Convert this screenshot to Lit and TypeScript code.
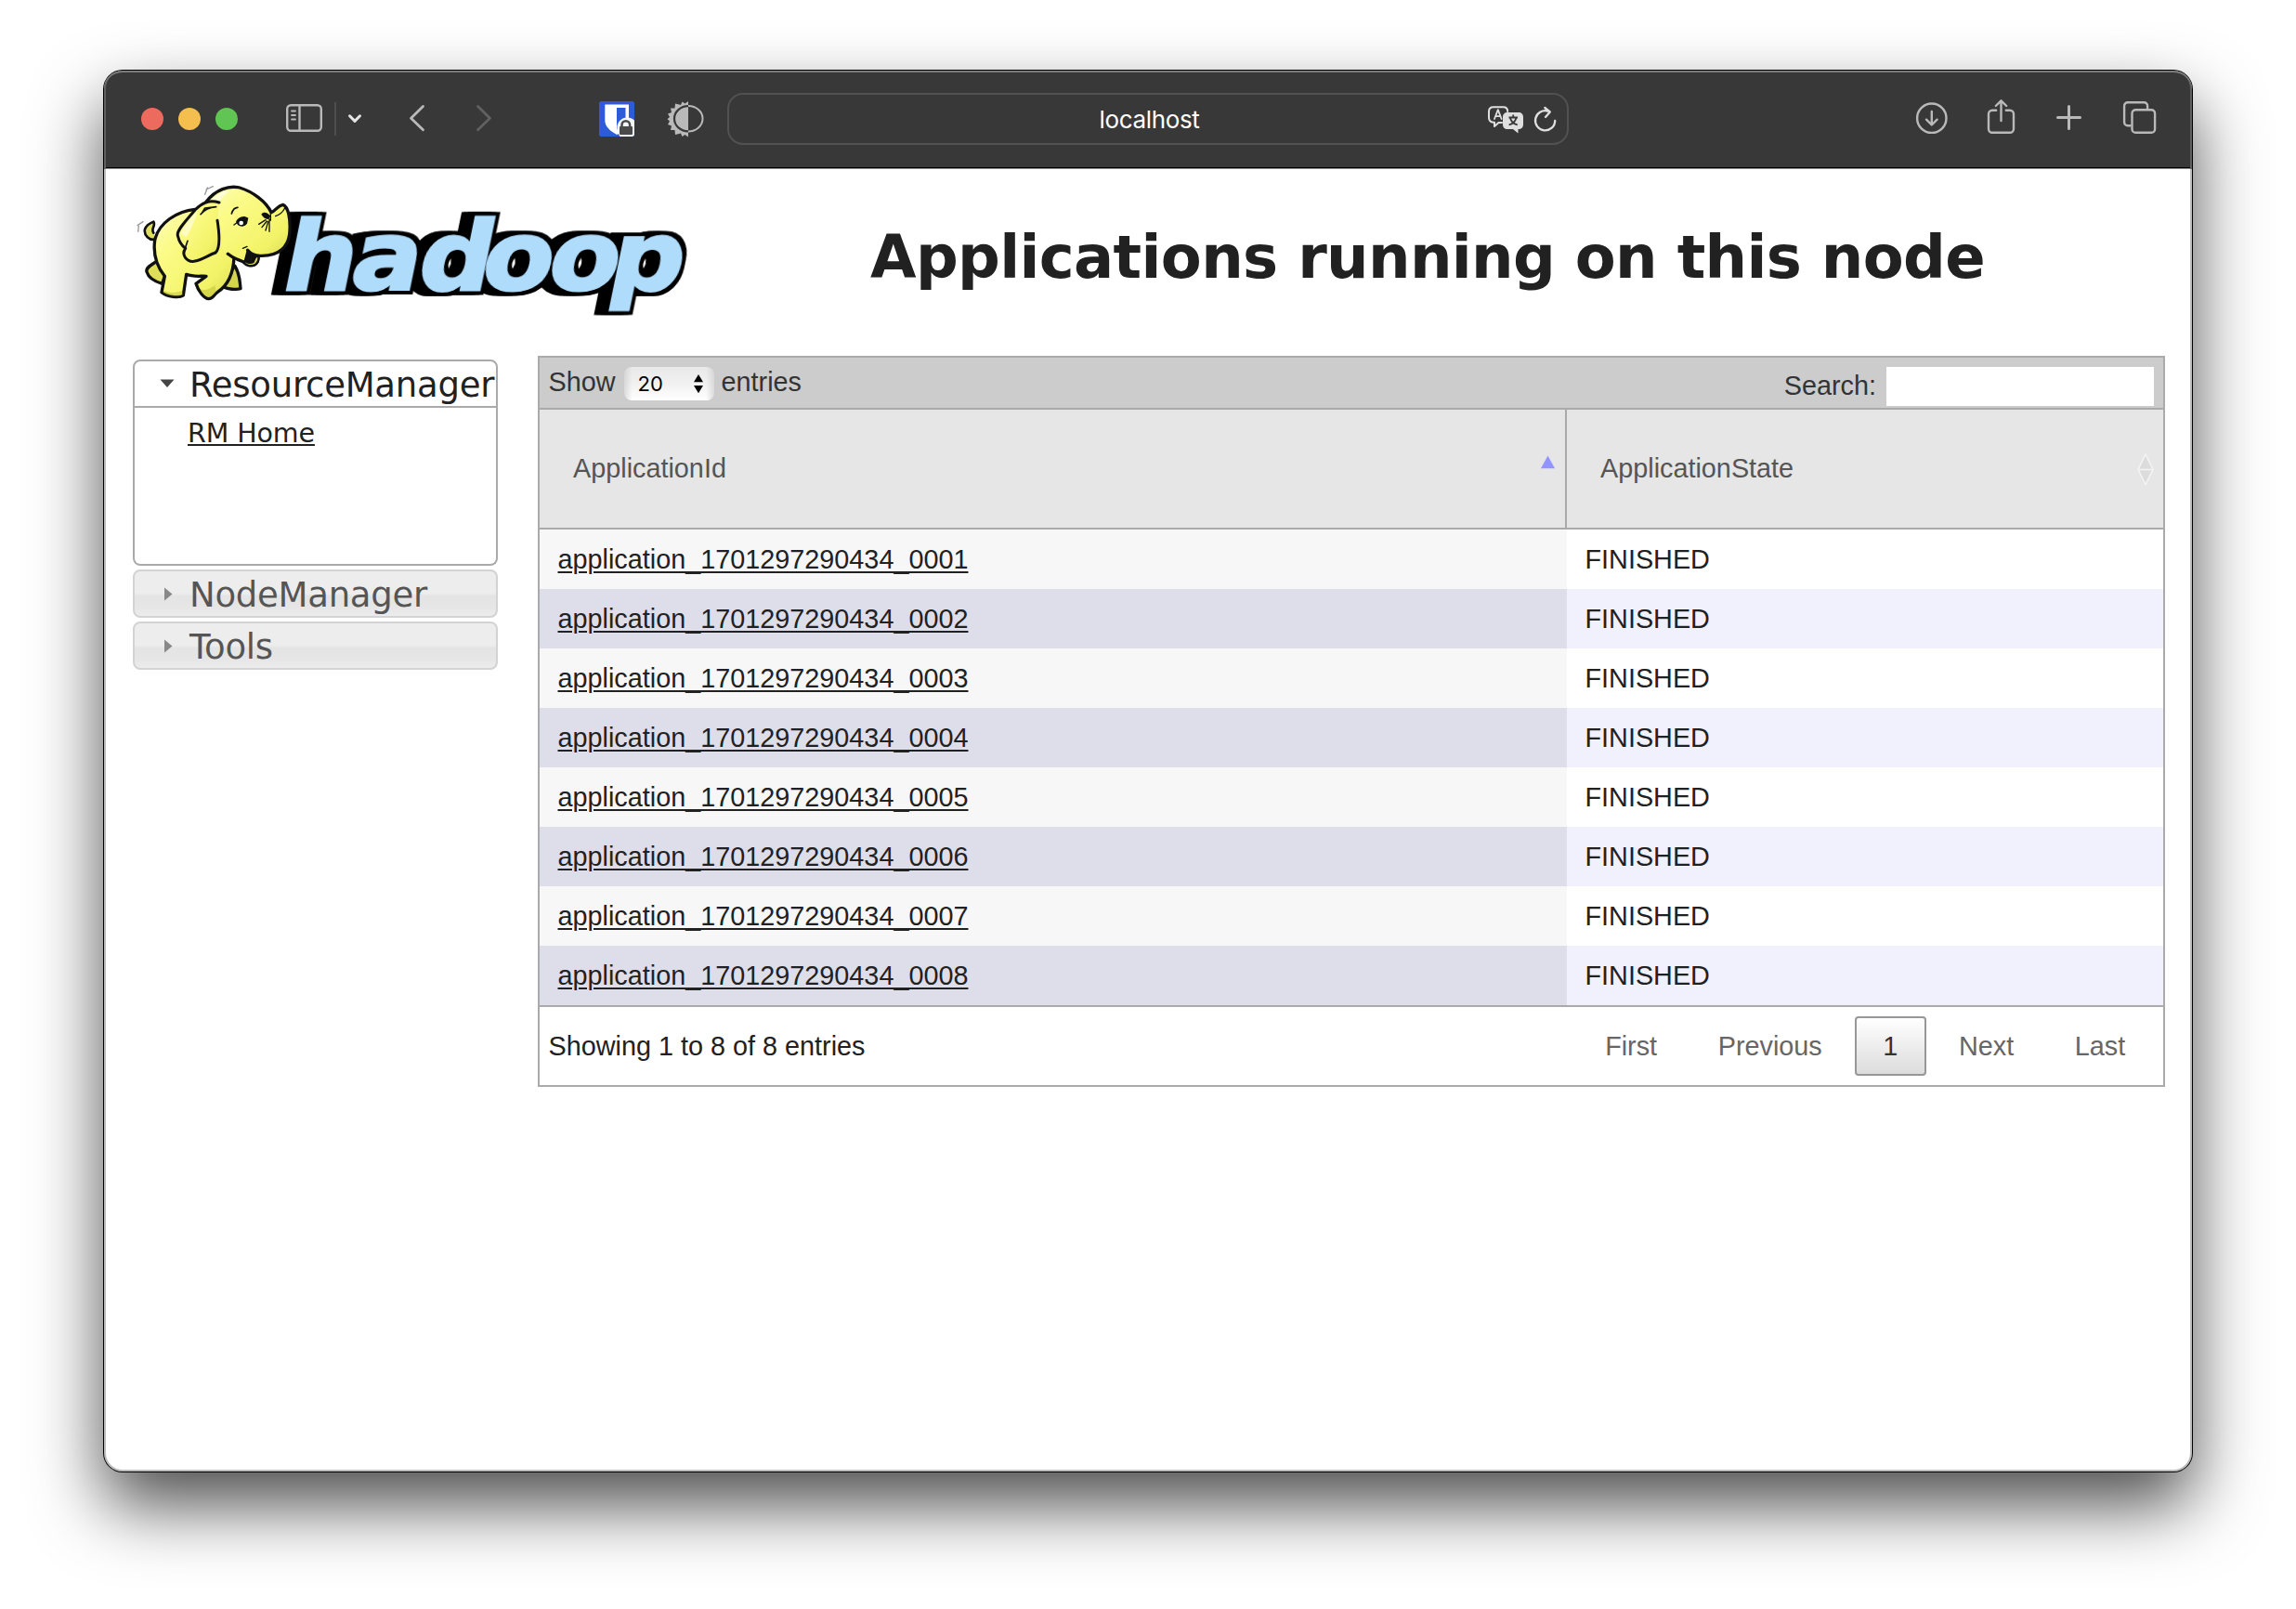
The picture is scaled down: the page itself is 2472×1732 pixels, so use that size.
import { LitElement, html, css, svg } from "lit";
import { customElement, property } from "lit/decorators.js";

const appIds = [1, 2, 3, 4, 5, 6, 7, 8].map((n) => `application_1701297290434_000${n}`);

@customElement("browser-toolbar")
export class BrowserToolbar extends LitElement {
  static styles = css`
    :host { display: block; }
    .bar {
      display: flex;
      align-items: center;
      height: 104px;
      background: #383838;
      border-bottom: 1px solid #000;
    }
    .lights { display: flex; gap: 16px; padding-left: 40px; }
    .light { width: 24px; height: 24px; border-radius: 50%; }
    .red { background: #ed6a5e; }
    .yellow { background: #f5bf4f; }
    .green { background: #61c554; }
    svg { display: block; flex: none; fill: none; stroke: #b9b9b9; stroke-width: 2.4; stroke-linecap: round; stroke-linejoin: round; }
    .nav { display: flex; padding-left: 40px; gap: 30px; width: 388px; box-sizing: border-box; }
    .pair { display: flex; }
    .ext { display: flex; gap: 24px; width: 139px; }
    .address {
      display: flex;
      align-items: center;
      box-sizing: border-box;
      width: 906px;
      height: 56px;
      border: 2px solid #515151;
      border-radius: 17px;
      padding-left: 398.500px;
      padding-right: 9px;
      color: #fff;
      font: 26px/36px Inter, "Liberation Sans", sans-serif;
      letter-spacing: -0.35px;
      justify-content: space-between;
    }
    .host { padding-top: 1px; }
    .right { display: flex; gap: 16px; margin-left: auto; padding-right: 27px; }
  `;

  render() {
    return html`
      <div class="bar">
        <div class="lights">
          <div class="light red"></div>
          <div class="light yellow"></div>
          <div class="light green"></div>
        </div>
        <div class="nav">
          <div class="pair">
            <svg width="62" height="52" viewBox="296 102 62 52">
              <rect x="309.2" y="113.2" width="36.6" height="27.6" rx="4" />
              <path d="M322.5 113.5v27" />
              <path stroke-width="1.8" d="M314 119.5h4M314 124h4M314 128.5h4" />
            </svg>
            <svg width="42" height="52" viewBox="358 102 42 52">
              <path stroke="#4e4e4e" stroke-width="2" stroke-linecap="butt" d="M361 110v36" />
              <path stroke="#e4e4e4" stroke-width="3" d="M376.500 124.800l5.500 5.600l5.500-5.600" />
            </svg>
          </div>
          <svg width="40" height="52" viewBox="430 102 40 52">
            <path stroke-width="2.800" d="M455.500 114.500L442.500 127.200L455.500 139.800" />
          </svg>
          <svg width="40" height="52" viewBox="500 102 40 52">
            <path stroke="#616161" stroke-width="2.800" d="M514.500 114.500L527.500 127.200L514.500 139.800" />
          </svg>
        </div>
        <div class="ext">
          <svg width="46" height="52" viewBox="644 102 46 52">
            <rect x="645" y="109" width="38" height="38" rx="2.500" fill="#2e5cd9" stroke="none" />
            <path fill="#fff" stroke="none" d="M651.300 112.600h25.700v17c0 7-6 12-12.800 15.400c-6.800-3.400-12.900-8.400-12.900-15.400z" />
            <path fill="#2e5cd9" stroke="none" d="M664 116h9.500v13.500c0 4-4.500 7-9.500 10z" />
            <path fill="#f3f6fc" stroke="none" d="M683 129.500c-6-6-17-3-18.500 6c-.6 4 .4 8 3 11.500h13c1.500 0 2.500-1 2.500-2.500z" />
            <path stroke="#4a4a4a" stroke-width="2.500" d="M669.500 137v-2.500a4.300 4.300 0 0 1 8.600 0v2.500" />
            <rect x="667" y="136" width="14" height="9" rx="1" fill="#4a4a4a" stroke="none" />
          </svg>
          <svg width="50" height="52" viewBox="714 102 50 52">
            <path fill="#b9b9b9" stroke="none" d="M741 109l-3.500 2.500l-3-2l-1.500 3.500l-6-1.500l-.5 5l-4.500 0l1 4.500l-4 1.500l2 3.500l-2.500 2.200l2.500 2.200l-2 3.500l4 1.500l-1 4.500l4.500 0l.5 5l6-1.500l1.500 3.500l3-2l3.500 2.500z" />
            <ellipse cx="741" cy="127.700" rx="15" ry="13.600" stroke="#383838" stroke-width="2.200" />
            <path stroke="#b9b9b9" stroke-width="2" stroke-linecap="butt" d="M741 114a15.500 13.700 0 0 1 0 27.400" />
          </svg>
        </div>
        <div class="address">
          <span class="host">localhost</span>
          <svg width="80" height="52" viewBox="1598 102 80 52">
            <g stroke="#dfdfdf" stroke-width="2">
              <path d="M1617 132h-3.500l-4.500 4v-4.200c-3.800 0-6-1.800-6-5v-6.800c0-3 2-4.800 5-4.800h10.500c3 0 4.700 1.800 4.700 4.800" />
              <path stroke-width="1.800" d="M1609 128l3.800-9.800l3.800 9.800M1610.300 125.200h5" />
              <path fill="#dfdfdf" stroke="none" d="M1623 121h12c3 0 5 2 5 5v8c0 3-2 5-5 5h-.5v4.500l-5.500-4.500h-6c-3 0-5-2-5-5v-8c0-3 2-5 5-5z" />
              <path stroke="#383838" stroke-width="1.800" stroke-linecap="butt" d="M1624.500 126.500h9.500M1629.200 123.600v3M1626 127c1 4 4 6.500 7.800 7.300M1632.400 127c-1 4-4 6.500-7.800 7.300" />
              <path stroke-width="2.300" d="M1666.500 119.600a10.600 10.600 0 1 0 7.700 10.300M1663.300 116l5.500 4.400l-4.800 5.600" />
            </g>
          </svg>
        </div>
        <div class="right">
          <svg width="46" height="52" viewBox="2057 102 46 52">
            <circle cx="2079.800" cy="127.200" r="15.700" />
            <path d="M2079.800 120v14M2074 128.700l5.800 5.800l5.800-5.800" />
          </svg>
          <svg width="60" height="52" viewBox="2119 102 60 52">
            <path d="M2149.200 118.800h-4.200a4 4 0 0 0-4 4v16a4 4 0 0 0 4 4h19a4 4 0 0 0 4-4v-16a4 4 0 0 0-4-4h-4.200" />
            <path d="M2154.500 130v-21.500M2148.800 114l5.700-5.700l5.700 5.700" />
          </svg>
          <svg width="60" height="52" viewBox="2195 102 60 52">
            <path stroke-width="3" d="M2215.500 126.600h24M2227.500 114.600v24" />
          </svg>
          <svg width="62" height="52" viewBox="2271 102 62 52">
            <path d="M2293.500 135.200h-2.700a3.700 3.700 0 0 1-3.700-3.700v-17.600a3.700 3.700 0 0 1 3.700-3.700h17.600a3.700 3.700 0 0 1 3.700 3.700v3" />
            <rect x="2295.500" y="118.200" width="24.600" height="24.600" rx="3.800" />
          </svg>
        </div>
      </div>
    `;
  }
}

const elephant = svg`
  <g transform="scale(0.33333)" stroke="#111" stroke-width="10" stroke-linejoin="round" stroke-linecap="round">
    <g stroke="#999" stroke-width="4" fill="none">
      <path d="M272 88L280 66M276 72L298 62M56 208L58 190M54 188L72 176" />
    </g>
    <path fill="#e0e060" stroke-width="8" d="M114 232C92 240 74 218 78 200C84 184 96 180 106 176C114 190 96 198 106 212" />
    <path fill="#dede58" d="M116 304C98 316 80 324 84 338C90 358 112 370 134 376L146 340Z" />
    <path fill="#d4d44c" d="M368 318C386 346 384 368 387 392C370 396 345 394 334 388L345 350Z" />
    <path fill="url(#hide)" d="M240 136C180 142 122 180 110 236C104 280 118 322 142 352L132 404C150 418 188 424 202 414L212 346C236 356 262 350 276 352L243 376C250 400 270 424 284 425C298 424 300 412 312 404C346 382 364 340 366 290L330 160Z" />
    <path fill="#c8c83c" opacity=".6" stroke="none" d="M140 398C160 408 180 405 198 400L200 412C180 420 150 414 137 404ZM256 394C275 400 290 392 304 380L308 402C295 416 290 420 284 420C270 418 262 406 256 394Z" />
    <path fill="#111" stroke-width="8" d="M402 262L398 304L424 318C444 314 448 298 444 284Z" />
    <path fill="#d8d850" stroke-width="7" d="M390 300C402 318 420 324 436 314C446 304 446 292 444 286C434 286 432 296 428 306C416 312 402 306 396 296Z" />
    <path fill="url(#hide)" stroke="none" d="M276 112C306 72 350 58 384 66C424 78 470 110 486 146C502 140 506 124 524 121C542 128 548 168 546 206C544 256 512 288 450 286C434 286 420 276 408 264L398 302C380 298 360 290 346 280L300 240Z" />
    <path fill="none" d="M276 112C306 72 350 58 384 66C424 78 470 110 486 146C502 140 506 124 524 121C542 128 548 168 546 206C544 256 512 288 450 286C434 286 420 280 410 268M346 280C360 292 380 300 398 306" />
    <path fill="#fff" opacity=".55" stroke="none" d="M290 112C310 85 335 75 352 76C335 90 320 105 310 122Z" />
    <path fill="url(#hide)" stroke-width="9" d="M318 114C284 104 262 116 240 138C212 172 180 204 184 220C188 240 198 254 209 262C194 284 214 306 236 304C262 300 282 284 306 276C322 262 318 210 312 172" />
    <path fill="#fff" opacity=".5" stroke="none" d="M194 214C206 186 230 160 248 142C240 172 226 202 212 226Z" />
    <path fill="none" stroke-width="5" d="M258 152C268 140 284 130 308 128M262 148L272 132L290 130M208 262L216 238M358 150C362 136 368 130 378 130" />
    <path fill="#111" stroke="none" d="M372 176C380 160 396 154 412 164L408 182C400 192 388 194 378 186Z" />
    <circle cx="389" cy="180" r="7" fill="#fff" stroke="none" />
    <path fill="#111" stroke="none" d="M454 152C462 142 474 146 484 158L478 168C468 168 460 162 454 152Z" />
    <path fill="none" stroke-width="4" d="M374 180L366 186M446 184L468 170M456 194L472 174M468 204L476 176M480 208L480 168M484 146L484 172M500 158C512 154 524 144 530 132M394 262L408 256" />
  </g>`;

@customElement("hadoop-logo")
export class HadoopLogo extends LitElement {
  static styles = css`
    :host { display: block; }
    svg { display: block; }
    .word {
      font: bold 103px "DejaVu Sans", sans-serif;
      fill: #b0dcfc;
      stroke: #b0dcfc;
      stroke-width: 3px;
      filter: url(#extrude);
    }
  `;

  render() {
    return html`
      <svg width="620" height="160" viewBox="0 2 620 160">
        <defs>
          <linearGradient id="hide" x1="0" y1="0" x2="1" y2="1">
            <stop offset="0" stop-color="#fcfcc0" />
            <stop offset=".3" stop-color="#fbfb88" />
            <stop offset=".75" stop-color="#f3f368" />
            <stop offset="1" stop-color="#d8d850" />
          </linearGradient>
          <filter id="extrude" filterUnits="userSpaceOnUse" x="100" y="-120" width="600" height="170" color-interpolation-filters="sRGB">
            <feMorphology in="SourceAlpha" operator="dilate" radius="3.500" result="fat" />
            <feOffset in="fat" dx="-4" result="a" />
            <feOffset in="fat" dx="-8" result="b" />
            <feOffset in="fat" dx="-10.500" result="c" />
            <feMerge>
              <feMergeNode in="c" /><feMergeNode in="b" /><feMergeNode in="a" /><feMergeNode in="fat" />
              <feMergeNode in="SourceGraphic" />
            </feMerge>
          </filter>
        </defs>
        <g transform="translate(0 132) skewX(-11.600) scale(1.070 1)">
          <text class="word" x="159 228 295.500 359.500 426.500 488" y="0">hadoop</text>
        </g>
        ${elephant}
      </svg>
    `;
  }
}

@customElement("side-menu")
export class SideMenu extends LitElement {
  static styles = css`
    :host { display: flex; flex-direction: column; gap: 4px; width: 393px; font-family: Verdana, "DejaVu Sans", sans-serif; }
    .head {
      display: flex;
      align-items: center;
      box-sizing: border-box;
      height: 52px;
      border: 2px solid #d3d3d3;
      border-radius: 8px;
      padding-left: 27px;
      background: linear-gradient(#ededed 0 50%, #e4e4e4 55%, #e6e6e6 80%, #ececec);
      color: #555;
      font-size: 37px;
      line-height: 46px;
      letter-spacing: -0.25px;
      overflow: hidden;
    }
    .head span { padding: 4px 0 0 1px; }
    .head.open { border-color: #aaa; background: #fff; color: #212121; border-radius: 8px 8px 0 0; }
    .body {
      box-sizing: border-box;
      height: 170px;
      border: 2px solid #aaa;
      border-top: 0;
      border-radius: 0 0 8px 8px;
      padding: 11px 0 0 57px;
      color: #212121;
      font-size: 28.500px;
      line-height: 34px;
      letter-spacing: -0.100px;
    }
    .link { text-decoration: underline; text-decoration-thickness: 2px; text-underline-offset: 2px; }
    svg { display: block; flex: none; width: 31px; height: 20px; }
  `;

  render() {
    return html`
      <div>
        <div class="head open">
          <svg viewBox="0 0 31 20"><path fill="#444" d="M0.500 5.500h15l-7.500 8.500z" /></svg>
          <span>ResourceManager</span>
        </div>
        <div class="body"><a class="link">RM Home</a></div>
      </div>
      ${["NodeManager", "Tools"].map(
        (label) => html`
          <div class="head">
            <svg viewBox="0 0 31 20"><path fill="#888" d="M5 3.500v14l8.500-7z" /></svg>
            <span>${label}</span>
          </div>
        `
      )}
    `;
  }
}

@customElement("apps-table")
export class AppsTable extends LitElement {
  @property({ type: Array }) rows: string[] = [];

  static styles = css`
    :host {
      display: block;
      box-sizing: border-box;
      width: 1752px;
      border: 2px solid #aaa;
      font: 28.800px/34px "Liberation Sans", Arial, sans-serif;
      color: #212121;
    }
    .tools {
      display: flex;
      align-items: flex-start;
      height: 54px;
      padding: 0 10px 0 9.500px;
      background: #ccc;
      border-bottom: 2px solid #aaa;
      color: #333;
    }
    .show { padding-top: 9px; }
    .select {
      display: flex;
      align-items: center;
      justify-content: space-between;
      box-sizing: border-box;
      width: 97px;
      height: 36px;
      margin: 10px 8px 0 9px;
      padding: 0 11px 0 15px;
      border-radius: 8px;
      background: linear-gradient(90deg, #ccca, #ccc0 9%, #ccc0 91%, #ccca), linear-gradient(#e8e8e8, #f1f1f1 50%, #fff);
      color: #000;
      font: 22px/36px Inter, "Liberation Sans", sans-serif;
    }
    .search { margin-left: auto; padding-top: 13px; }
    .input { width: 288px; height: 42px; margin: 10px 0 0 11px; background: #fff; }
    .row { display: grid; grid-template-columns: 1106px 1fr; height: 64px; align-items: stretch; }
    .thead { height: 127px; background: #e6e6e6; border-bottom: 2px solid #aaa; color: #555; }
    .th { display: flex; align-items: center; justify-content: space-between; padding: 0 9px 0 36px; }
    .th span { padding-bottom: 2px; }
    .th:first-child { border-right: 2px solid #aaa; }
    .td { display: flex; align-items: center; padding-left: 19.500px; background: #fff; }
    .id { background: #f7f7f7; }
    .even .td { background: #f1f1fe; }
    .even .id { background: #dedeea; }
    .link { text-decoration: underline; text-decoration-thickness: 2px; text-underline-offset: 3px; }
    .foot { display: flex; align-items: center; height: 84px; padding: 0 10px 0 9.500px; border-top: 2px solid #aaa; background: #fff; }
    .pages { display: flex; gap: 4px; margin-left: auto; color: #666; }
    .page { box-sizing: border-box; height: 64px; line-height: 60px; padding: 0 28.800px; border: 2px solid transparent; border-radius: 4px; }
    .current { color: #333; border-color: #979797; background: linear-gradient(#fff, #dcdcdc); }
    svg { display: block; }
  `;

  render() {
    return html`
      <div class="tools">
        <span class="show">Show</span>
        <div class="select">
          <span>20</span>
          <svg width="12" height="22" viewBox="0 0 12 22"><path d="M1 9.200L6 1l5 8.200zM1 13l5 8.200l5-8.200z" /></svg>
        </div>
        <span class="show">entries</span>
        <span class="search">Search:</span>
        <div class="input"></div>
      </div>
      <div class="row thead">
        <div class="th">
          <span>ApplicationId</span>
          <svg width="20" height="38" viewBox="0 0 20 38"><path fill="#9193ff" stroke="#eee" stroke-width=".5" d="M10.500 4l8 14.500h-16z" /></svg>
        </div>
        <div class="th">
          <span>ApplicationState</span>
          <svg width="20" height="38" viewBox="0 0 20 38">
            <path fill="#dcdcdc" stroke="#f4f4f4" stroke-width="1.500" d="M10 3l8 16.500l-8 16l-8-16zM2 19.500h16" />
          </svg>
        </div>
      </div>
      ${this.rows.map(
        (id, i) => html`
          <div class="row ${i % 2 ? "even" : ""}">
            <div class="td id"><a class="link">${id}</a></div>
            <div class="td">FINISHED</div>
          </div>
        `
      )}
      <div class="foot">
        <span>Showing 1 to 8 of 8 entries</span>
        <div class="pages">
          <span class="page">First</span>
          <span class="page">Previous</span>
          <span class="page current">1</span>
          <span class="page">Next</span>
          <span class="page">Last</span>
        </div>
      </div>
    `;
  }
}

@customElement("app-root")
export class AppRoot extends LitElement {
  static styles = css`
    :host {
      display: block;
      box-sizing: border-box;
      width: 2472px;
      height: 1732px;
      padding: 76px 112px 148px;
      background: #fff;
      overflow: hidden;
    }
    .window {
      position: relative;
      height: 1508px;
      border-radius: 20px;
      background: #fff;
      box-shadow: 0 0 0 1px #000, 0 36px 76px rgba(0, 0, 0, 0.7);
    }
    .clip { height: 100%; border-radius: 20px; overflow: hidden; }
    .rim {
      position: absolute;
      inset: 0;
      border-radius: 20px;
      pointer-events: none;
      box-shadow: inset 0 0 0 2px rgba(0, 0, 0, 0.26);
    }
    .rim.top { bottom: auto; height: 105px; border-radius: 20px 20px 0 0; box-shadow: inset 0 2px 0 #7b7b7b, inset 2px 0 0 #606060, inset -2px 0 0 #606060; }
    .page { border-top: 1px solid #888; }
    .header { display: flex; height: 201px; padding-left: 18px; }
    .title {
      margin: 0;
      padding: 55px 0 0 187px;
      color: #212121;
      font: bold 64px/80px Verdana, "DejaVu Sans", sans-serif;
      letter-spacing: -0.650px;
      white-space: nowrap;
    }
    .main { display: flex; align-items: flex-start; gap: 43px; padding-left: 31px; }
    .side { margin-top: 4px; }
  `;

  render() {
    return html`
      <div class="window">
        <div class="clip">
          <browser-toolbar></browser-toolbar>
          <div class="page">
            <div class="header">
              <hadoop-logo></hadoop-logo>
              <h1 class="title">Applications running on this node</h1>
            </div>
            <div class="main">
              <side-menu class="side"></side-menu>
              <apps-table .rows=${appIds}></apps-table>
            </div>
          </div>
        </div>
        <div class="rim"></div>
        <div class="rim top"></div>
      </div>
    `;
  }
}
